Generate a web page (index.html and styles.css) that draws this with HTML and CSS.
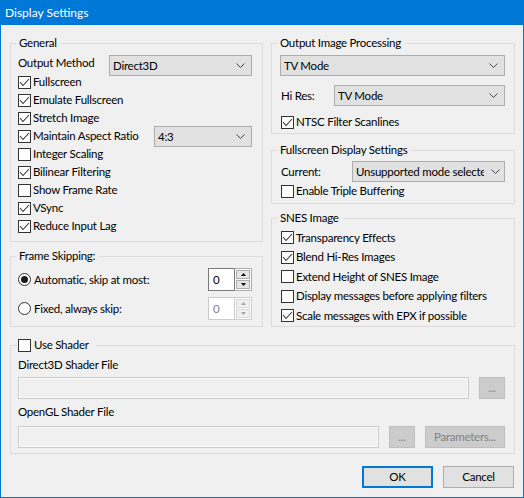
FILE: index.html
```html
<!DOCTYPE html>
<html lang="en">
<head>
<meta charset="utf-8">
<title>Display Settings</title>
<link rel="stylesheet" href="styles.css">
</head>
<body>
<div class="window">
  <div class="titlebar">Display Settings</div>
  <div class="client">
    <div class="columns">
      <div class="column">
        <fieldset class="group general">
          <legend>General</legend>
          <div class="method">
            <span class="label">Output Method</span>
            <div class="combo combo-method"><span class="combo-text">Direct3D</span><svg class="chev" width="9" height="5" viewBox="0 0 9 5"><polyline points="0.5,0.5 4.5,4.5 8.5,0.5"/></svg></div>
          </div>
          <div class="check"><span class="box"><svg width="11" height="11" viewBox="0 0 11 11"><polyline points="1,5 4,8.5 10,2"/></svg></span><span>Fullscreen</span></div>
          <div class="check"><span class="box"><svg width="11" height="11" viewBox="0 0 11 11"><polyline points="1,5 4,8.5 10,2"/></svg></span><span>Emulate Fullscreen</span></div>
          <div class="check"><span class="box"><svg width="11" height="11" viewBox="0 0 11 11"><polyline points="1,5 4,8.5 10,2"/></svg></span><span>Stretch Image</span></div>
          <div class="check"><span class="box"><svg width="11" height="11" viewBox="0 0 11 11"><polyline points="1,5 4,8.5 10,2"/></svg></span><span>Maintain Aspect Ratio</span>
            <div class="combo combo-aspect"><span class="combo-text">4:3</span><svg class="chev" width="9" height="5" viewBox="0 0 9 5"><polyline points="0.5,0.5 4.5,4.5 8.5,0.5"/></svg></div>
          </div>
          <div class="check"><span class="box"></span><span>Integer Scaling</span></div>
          <div class="check"><span class="box"><svg width="11" height="11" viewBox="0 0 11 11"><polyline points="1,5 4,8.5 10,2"/></svg></span><span>Bilinear Filtering</span></div>
          <div class="check"><span class="box"></span><span>Show Frame Rate</span></div>
          <div class="check"><span class="box"><svg width="11" height="11" viewBox="0 0 11 11"><polyline points="1,5 4,8.5 10,2"/></svg></span><span>VSync</span></div>
          <div class="check"><span class="box"><svg width="11" height="11" viewBox="0 0 11 11"><polyline points="1,5 4,8.5 10,2"/></svg></span><span>Reduce Input Lag</span></div>
        </fieldset>

        <fieldset class="group frameskip">
          <legend>Frame Skipping:</legend>
          <div class="radio-row first">
            <span class="radio selected"><span class="dot"></span></span><span>Automatic, skip at most:</span>
            <div class="spin">
              <span class="spin-value">0</span>
              <span class="spin-buttons">
                <span class="spin-btn"><svg width="5" height="3" viewBox="0 0 5 3"><polygon points="0,3 2.5,0 5,3"/></svg></span>
                <span class="spin-btn"><svg width="5" height="3" viewBox="0 0 5 3"><polygon points="0,0 5,0 2.5,3"/></svg></span>
              </span>
            </div>
          </div>
          <div class="radio-row second">
            <span class="radio"></span><span>Fixed, always skip:</span>
            <div class="spin disabled">
              <span class="spin-value">0</span>
              <span class="spin-buttons">
                <span class="spin-btn"><svg width="5" height="3" viewBox="0 0 5 3"><polygon points="0,3 2.5,0 5,3"/></svg></span>
                <span class="spin-btn"><svg width="5" height="3" viewBox="0 0 5 3"><polygon points="0,0 5,0 2.5,3"/></svg></span>
              </span>
            </div>
          </div>
        </fieldset>
      </div>

      <div class="column right">
        <fieldset class="group processing">
          <legend>Output Image Processing</legend>
          <div class="combo combo-filter"><span class="combo-text">TV Mode</span><svg class="chev" width="9" height="5" viewBox="0 0 9 5"><polyline points="0.5,0.5 4.5,4.5 8.5,0.5"/></svg></div>
          <div class="labeled hires">
            <span class="label">Hi Res:</span>
            <div class="combo combo-hires"><span class="combo-text">TV Mode</span><svg class="chev" width="9" height="5" viewBox="0 0 9 5"><polyline points="0.5,0.5 4.5,4.5 8.5,0.5"/></svg></div>
          </div>
          <div class="check ntsc"><span class="box"><svg width="11" height="11" viewBox="0 0 11 11"><polyline points="1,5 4,8.5 10,2"/></svg></span><span>NTSC Filter Scanlines</span></div>
        </fieldset>

        <fieldset class="group fullscreen">
          <legend>Fullscreen Display Settings</legend>
          <div class="labeled current">
            <span class="label">Current:</span>
            <div class="combo combo-mode"><span class="combo-text">Unsupported mode selected</span><svg class="chev" width="9" height="5" viewBox="0 0 9 5"><polyline points="0.5,0.5 4.5,4.5 8.5,0.5"/></svg></div>
          </div>
          <div class="check"><span class="box"></span><span>Enable Triple Buffering</span></div>
        </fieldset>

        <fieldset class="group snes">
          <legend>SNES Image</legend>
          <div class="check"><span class="box"><svg width="11" height="11" viewBox="0 0 11 11"><polyline points="1,5 4,8.5 10,2"/></svg></span><span>Transparency Effects</span></div>
          <div class="check"><span class="box"><svg width="11" height="11" viewBox="0 0 11 11"><polyline points="1,5 4,8.5 10,2"/></svg></span><span>Blend Hi-Res Images</span></div>
          <div class="check"><span class="box"></span><span>Extend Height of SNES Image</span></div>
          <div class="check"><span class="box"></span><span>Display messages before applying filters</span></div>
          <div class="check"><span class="box"><svg width="11" height="11" viewBox="0 0 11 11"><polyline points="1,5 4,8.5 10,2"/></svg></span><span>Scale messages with EPX if possible</span></div>
        </fieldset>
      </div>
    </div>

    <fieldset class="group shader">
      <legend class="check-legend"><span class="box"></span><span>Use Shader</span></legend>
      <div class="caption first">Direct3D Shader File</div>
      <div class="file-row">
        <span class="textfield"></span>
        <span class="button disabled browse">...</span>
      </div>
      <div class="caption">OpenGL Shader File</div>
      <div class="file-row second">
        <span class="textfield"></span>
        <span class="button disabled browse">...</span>
        <span class="button disabled params">Parameters...</span>
      </div>
    </fieldset>

    <div class="dialog-buttons">
      <span class="button default">OK</span>
      <span class="button">Cancel</span>
    </div>
  </div>
</div>
</body>
</html>
```

FILE: styles.css
```css
* {
  box-sizing: border-box;
}

html,
body {
  margin: 0;
  padding: 0;
  background: #f0f0f0;
}

body {
  font-family: Lato, "Liberation Sans", sans-serif;
  font-size: 11.5px;
  letter-spacing: -0.25px;
  line-height: 16px;
  color: #000;
}

/* window frame */
.window {
  width: 524px;
  height: 498px;
  display: flex;
  flex-direction: column;
  background: #f0f0f0;
  border: 1px solid #0078d7;
  border-top: 0;
}

.titlebar {
  flex: none;
  height: 25px;
  margin: 0 -1px;
  padding-left: 5px;
  background: #0078d7;
  color: #fff;
  font-size: 12px;
  letter-spacing: 0;
  line-height: 25px;
}

.client {
  flex: 1;
  display: flex;
  flex-direction: column;
  padding: 10px 8px 0 9px;
}

.columns {
  display: grid;
  grid-template-columns: 253px 244px;
  column-gap: 8px;
  align-items: start;
}

.column {
  display: flex;
  flex-direction: column;
}

/* group boxes */
.group {
  margin: 0;
  min-width: 0;
  border: 1px solid #dcdcdc;
  padding: 0 10px 6px 7px;
}

.group legend {
  margin-left: -2px;
  padding: 0 4px 0 3px;
  line-height: 16px;
}

.right .group {
  padding: 0 9px;
}

.right .group legend {
  margin-left: -4px;
}

/* checkboxes */
.check {
  display: flex;
  align-items: center;
  height: 18px;
  white-space: nowrap;
}

.box {
  flex: none;
  width: 13px;
  height: 13px;
  margin-right: 2px;
  border: 1px solid #333;
  background: #fff;
  display: flex;
  align-items: center;
  justify-content: center;
}

.box svg {
  display: block;
}

.box polyline {
  fill: none;
  stroke: #333;
  stroke-width: 1.1;
}

/* radio buttons */
.radio {
  flex: none;
  width: 13px;
  height: 13px;
  margin-right: 3px;
  border: 1px solid #333;
  border-radius: 50%;
  background: #fff;
  display: flex;
  align-items: center;
  justify-content: center;
}

.radio .dot {
  width: 7px;
  height: 7px;
  border-radius: 50%;
  background: #1a1a1a;
}

/* combo boxes */
.combo {
  flex: none;
  display: flex;
  align-items: center;
  height: 21px;
  padding-left: 3px;
  border: 1px solid #adadad;
  background: #e1e1e1;
}

.combo-text {
  flex: 1;
  overflow: hidden;
  white-space: nowrap;
  line-height: 19px;
}

.chev {
  flex: none;
  margin: 0 6px 0 8px;
}

.chev polyline {
  fill: none;
  stroke: #444;
  stroke-width: 1;
}

/* General */
.method {
  display: flex;
  align-items: flex-start;
  height: 18px;
  margin-top: 4px;
}

.combo-method {
  width: 143px;
  margin-left: auto;
}

.combo-aspect {
  width: 98px;
  margin-left: auto;
}

/* Frame Skipping */
.frameskip {
  margin-top: 6px;
}

.radio-row {
  display: flex;
  align-items: center;
  height: 23px;
  margin-top: 4px;
}

.radio-row.second {
  margin-top: 6px;
}

.spin {
  display: flex;
  width: 44px;
  height: 23px;
  margin-left: auto;
}

.spin-value {
  width: 26px;
  padding-left: 4px;
  border: 1px solid #7a7a7a;
  border-right: 0;
  background: #fff;
  line-height: 21px;
}

.spin-buttons {
  width: 18px;
  display: flex;
  flex-direction: column;
  gap: 1px;
  padding: 1px;
  border: 1px solid #adadad;
  border-left-color: #7a7a7a;
  background: #fff;
}

.spin-btn {
  flex: 1;
  display: flex;
  align-items: center;
  justify-content: center;
  border: 1px solid #adadad;
  background: #e5e5e5;
}

.spin-btn polygon {
  fill: #000;
}

.spin.disabled .spin-value {
  border-color: #cccccc;
  color: #838383;
}

.spin.disabled .spin-buttons {
  border-color: #cccccc;
}

.spin.disabled .spin-btn {
  border-color: #d9d9d9;
  background: #f0f0f0;
}

.spin.disabled .spin-btn polygon {
  fill: #a3a3a3;
}

/* Output Image Processing */
.combo-filter {
  margin: 4px 0 0 -1px;
}

.labeled {
  display: flex;
  align-items: center;
  height: 21px;
}

.hires {
  margin-top: 9px;
}

.combo-hires {
  width: 171px;
  margin-left: auto;
}

.ntsc {
  margin-top: 7px;
}

.right .processing {
  padding-bottom: 2px;
}

/* Fullscreen Display Settings */
.right .fullscreen {
  margin-top: 8px;
  padding-bottom: 3px;
}

.current {
  margin-top: 3px;
}

.combo-mode {
  width: 153px;
  margin-left: auto;
}

.combo-mode .chev {
  margin: 0 4px 0 7px;
}

/* SNES Image */
.right .snes {
  margin-top: 6px;
  padding-top: 2px;
}

.snes .check {
  height: 19.5px;
}

/* Shader */
.shader {
  margin-top: 10px;
  padding: 0 9px 5px 7px;
}

.shader .check-legend {
  display: flex;
  align-items: center;
  margin-left: -1px;
  padding: 0 7px 0 1px;
}

.shader .check-legend .box {
  margin-right: 3px;
}

.caption {
  margin-top: 5px;
}

.caption.first {
  margin-top: 4px;
}

.file-row {
  display: flex;
  gap: 10px;
  height: 22px;
  margin-top: 4px;
}

.file-row.second {
  margin-top: 6px;
}

.textfield {
  flex: 1;
  border: 1px solid #cccccc;
  box-shadow: inset 0 0 0 1px #fafafa;
  background: #f0f0f0;
}

/* push buttons */
.button {
  display: flex;
  align-items: center;
  justify-content: center;
  width: 71px;
  height: 22px;
  border: 1px solid #adadad;
  background: #e1e1e1;
  white-space: nowrap;
}

.button.default {
  border: 2px solid #0078d7;
}

.button.disabled {
  border-color: #bfbfbf;
  background: #cccccc;
  color: #838383;
}

.button.browse {
  width: 26px;
}

.button.params {
  width: 80px;
}

.dialog-buttons {
  display: flex;
  justify-content: flex-end;
  gap: 10px;
  margin-top: 12px;
  padding-right: 1px;
}
```
